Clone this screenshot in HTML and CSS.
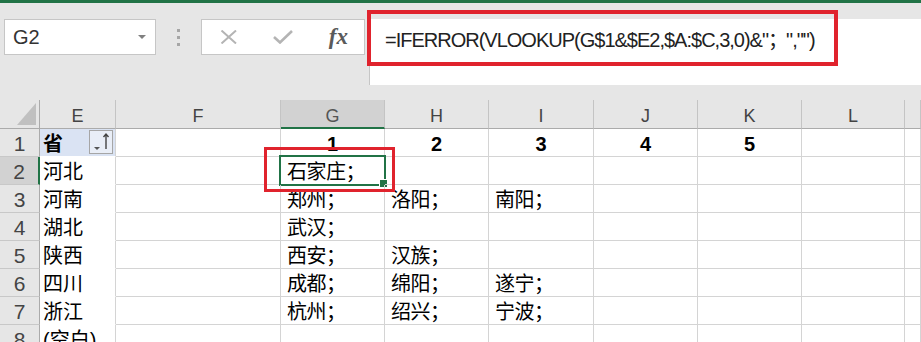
FILE: index.html
```html
<!DOCTYPE html>
<html lang="zh-CN">
  <head>
    <meta charset="UTF-8" />
    <meta name="viewport" content="width=device-width, initial-scale=1.0" />
    <title>VLOOKUP</title>
    <link rel="stylesheet" href="styles.css">
  </head>
  <body>
    <div class="b-app">
      <div class="b-app__edge"></div>

      <div class="b-bar">
        <div class="b-bar__name">
          <span>G2</span>
          <span class="b-bar__caret"></span>
        </div>
        <div class="b-bar__grip"><i></i><i></i><i></i></div>
        <div class="b-bar__fn">
          <svg class="b-bar__icon" width="20" height="14" viewBox="0 0 20 14">
            <path d="M2.5 0.5 L17 13.5 M17 0.5 L2.5 13.5" stroke="#b4b4b4" stroke-width="2" fill="none" />
          </svg>
          <svg class="b-bar__icon" width="20" height="14" viewBox="0 0 20 14">
            <path d="M1 7 L7 12.5 L19 1" stroke="#b4b4b4" stroke-width="2.6" fill="none" />
          </svg>
          <span class="b-bar__fx">fx</span>
        </div>
        <div class="b-bar__formula">=IFERROR(VLOOKUP(G$1&amp;$E2,$A:$C,3,0)&amp;"<span class="b-bar__semi">；</span>","")</div>
      </div>

      <div class="b-sheet">
        <!-- column headers -->
        <div class="b-sheet__corner"></div>
        <div class="b-sheet__col">E</div>
        <div class="b-sheet__col">F</div>
        <div class="b-sheet__col b-sheet__col_active">G</div>
        <div class="b-sheet__col">H</div>
        <div class="b-sheet__col">I</div>
        <div class="b-sheet__col">J</div>
        <div class="b-sheet__col">K</div>
        <div class="b-sheet__col">L</div>
        <div class="b-sheet__col"></div>

        <!-- row 1 -->
        <div class="b-sheet__row">1</div>
        <div class="b-cell b-cell_pivot b-cell_head">省
          <span class="b-cell__filter">
            <svg width="22" height="22" viewBox="0 0 22 22">
              <path d="M4 16 L10 16 L7 19 Z" fill="#555" />
              <path d="M16 3 L16 18 M13.5 6 L16 3 L18.5 6" stroke="#444" stroke-width="1.4" fill="none" />
            </svg>
          </span>
        </div>
        <div class="b-cell"></div>
        <div class="b-cell b-cell_num">1</div>
        <div class="b-cell b-cell_num">2</div>
        <div class="b-cell b-cell_num">3</div>
        <div class="b-cell b-cell_num">4</div>
        <div class="b-cell b-cell_num">5</div>
        <div class="b-cell"></div>
        <div class="b-cell"></div>

        <!-- row 2 -->
        <div class="b-sheet__row b-sheet__row_active">2</div>
        <div class="b-cell b-cell_pivot">河北</div>
        <div class="b-cell"></div>
        <div class="b-cell b-cell_city">石家庄；<span class="b-cell__frame"><span class="b-cell__handle"></span></span></div>
        <div class="b-cell"></div>
        <div class="b-cell"></div>
        <div class="b-cell"></div>
        <div class="b-cell"></div>
        <div class="b-cell"></div>
        <div class="b-cell"></div>

        <!-- row 3 -->
        <div class="b-sheet__row">3</div>
        <div class="b-cell b-cell_pivot">河南</div>
        <div class="b-cell"></div>
        <div class="b-cell b-cell_city">郑州；</div>
        <div class="b-cell b-cell_city">洛阳；</div>
        <div class="b-cell b-cell_city">南阳；</div>
        <div class="b-cell"></div>
        <div class="b-cell"></div>
        <div class="b-cell"></div>
        <div class="b-cell"></div>

        <!-- row 4 -->
        <div class="b-sheet__row">4</div>
        <div class="b-cell b-cell_pivot">湖北</div>
        <div class="b-cell"></div>
        <div class="b-cell b-cell_city">武汉；</div>
        <div class="b-cell"></div>
        <div class="b-cell"></div>
        <div class="b-cell"></div>
        <div class="b-cell"></div>
        <div class="b-cell"></div>
        <div class="b-cell"></div>

        <!-- row 5 -->
        <div class="b-sheet__row">5</div>
        <div class="b-cell b-cell_pivot">陕西</div>
        <div class="b-cell"></div>
        <div class="b-cell b-cell_city">西安；</div>
        <div class="b-cell b-cell_city">汉族；</div>
        <div class="b-cell"></div>
        <div class="b-cell"></div>
        <div class="b-cell"></div>
        <div class="b-cell"></div>
        <div class="b-cell"></div>

        <!-- row 6 -->
        <div class="b-sheet__row">6</div>
        <div class="b-cell b-cell_pivot">四川</div>
        <div class="b-cell"></div>
        <div class="b-cell b-cell_city">成都；</div>
        <div class="b-cell b-cell_city">绵阳；</div>
        <div class="b-cell b-cell_city">遂宁；</div>
        <div class="b-cell"></div>
        <div class="b-cell"></div>
        <div class="b-cell"></div>
        <div class="b-cell"></div>

        <!-- row 7 -->
        <div class="b-sheet__row">7</div>
        <div class="b-cell b-cell_pivot">浙江</div>
        <div class="b-cell"></div>
        <div class="b-cell b-cell_city">杭州；</div>
        <div class="b-cell b-cell_city">绍兴；</div>
        <div class="b-cell b-cell_city">宁波；</div>
        <div class="b-cell"></div>
        <div class="b-cell"></div>
        <div class="b-cell"></div>
        <div class="b-cell"></div>

        <!-- row 8 -->
        <div class="b-sheet__row">8</div>
        <div class="b-cell b-cell_pivot">(空白)</div>
        <div class="b-cell"></div>
        <div class="b-cell"></div>
        <div class="b-cell"></div>
        <div class="b-cell"></div>
        <div class="b-cell"></div>
        <div class="b-cell"></div>
        <div class="b-cell"></div>
        <div class="b-cell"></div>
      </div>

      <!-- red highlight marks -->
      <div class="b-mark b-mark_formula"></div>
      <div class="b-mark b-mark_cell"></div>
    </div>
  </body>
</html>
```

FILE: styles.css
```css
body
{
	margin: 0;
	overflow: hidden;
	background: #e6e6e6;
	font-family: "Liberation Sans", "Noto Sans CJK SC", sans-serif;
}

.b-app
{
	position: relative;
	width: 921px;
	height: 342px;
	overflow: hidden;
}

.b-app__edge
{
	height: 3px;
	background: #217346;
}

/* formula bar */
.b-bar
{
	display: flex;
	align-items: flex-start;
	padding: 16px 0 15px 4px;
	height: 66px;
}

.b-bar__name
{
	box-sizing: border-box;
	width: 152px;
	height: 36px;
	background: #fff;
	border: 1px solid #c6c6c6;
	display: flex;
	align-items: center;
	justify-content: space-between;
	padding: 0 9px 0 8px;
	font-size: 20px;
	color: #333;
}

.b-bar__caret
{
	width: 0;
	height: 0;
	border-left: 4px solid transparent;
	border-right: 4px solid transparent;
	border-top: 4px solid #808080;
}

.b-bar__grip
{
	display: flex;
	flex-direction: column;
	gap: 4px;
	margin: 10px 21px 0 21px;
}

.b-bar__grip i
{
	width: 3px;
	height: 3px;
	background: #a6a6a6;
}

.b-bar__fn
{
	box-sizing: border-box;
	width: 164px;
	height: 36px;
	background: #fff;
	border: 1px solid #c6c6c6;
	display: flex;
	align-items: center;
	padding: 0 16px 0 17px;
	gap: 34px;
}

.b-bar__fx
{
	font-family: "Liberation Serif", serif;
	font-style: italic;
	font-weight: bold;
	font-size: 23px;
	color: #5a5a5a;
	margin-left: auto;
}

.b-bar__formula
{
	box-sizing: border-box;
	flex: 1;
	margin-left: 4px;
	height: 66px;
	background: #fff;
	border-left: 1px solid #c6c6c6;
	padding: 5px 0 0 15px;
	font-size: 20px;
	letter-spacing: -1px;
	color: #222;
	white-space: nowrap;
}

.b-bar__semi
{
	letter-spacing: -2px;
}

/* sheet */
.b-sheet
{
	display: grid;
	grid-template-columns: 40px 76px 165px 104px 104px 105px 104px 104px 103px 1fr;
	grid-template-rows: 29px repeat(8, 28px);
	background: #fff;
}

.b-sheet__corner
{
	position: relative;
	background: #e6e6e6;
	border-right: 1px solid #ababab;
	border-bottom: 1px solid #ababab;
}

.b-sheet__corner::after
{
	content: "";
	position: absolute;
	right: 3px;
	bottom: 3px;
	width: 19px;
	height: 22px;
	background: #c0c0c0;
	clip-path: polygon(100% 0, 100% 100%, 0 100%);
}

.b-sheet__col
{
	background: #e6e6e6;
	border-right: 1px solid #c4c4c4;
	border-bottom: 1px solid #ababab;
	text-align: center;
	font-size: 18px;
	line-height: 32px;
	color: #444;
}

.b-sheet__col_active
{
	background: #d2d2d2;
	border-bottom: 2px solid #217346;
	color: #555;
}

.b-sheet__row
{
	background: #e6e6e6;
	border-right: 1px solid #ababab;
	border-bottom: 1px solid #c8c8c8;
	text-align: center;
	font-size: 21px;
	line-height: 30px;
	color: #444;
}

.b-sheet__row_active
{
	background: #d2d2d2;
	border-right: 2px solid #217346;
}

.b-cell
{
	position: relative;
	border-right: 1px solid #d4d4d4;
	border-bottom: 1px solid #d4d4d4;
	padding-left: 6px;
	font-size: 20px;
	line-height: 30px;
	color: #000;
	white-space: nowrap;
}

.b-cell_pivot
{
	padding-left: 3px;
	border-bottom-color: #fff;
}

.b-cell_head
{
	background: #dae3f3;
	font-weight: bold;
}

.b-cell__filter
{
	position: absolute;
	right: 2px;
	top: 1px;
	box-sizing: border-box;
	width: 24px;
	height: 24px;
	border: 1px solid #a6a6a6;
	background: #e9eef7;
	display: flex;
	align-items: center;
	justify-content: center;
}

.b-cell_num
{
	padding-left: 0;
	text-align: center;
	font-weight: bold;
}

.b-cell_city
{
	letter-spacing: -0.5px;
}

.b-cell__frame
{
	position: absolute;
	left: -2px;
	top: -2px;
	box-sizing: border-box;
	width: 107px;
	height: 31px;
	border: 2px solid #217346;
}

.b-cell__handle
{
	position: absolute;
	right: -4px;
	bottom: -4px;
	width: 7px;
	height: 7px;
	background: #217346;
	border: 1px solid #fff;
}

/* red annotation boxes */
.b-mark
{
	position: absolute;
	box-sizing: border-box;
	border: 3px solid #e0232d;
}

.b-mark_formula
{
	left: 367px;
	top: 10px;
	width: 471px;
	height: 56px;
	border-width: 4px;
}

.b-mark_cell
{
	left: 264px;
	top: 147px;
	width: 131px;
	height: 45px;
}
```
